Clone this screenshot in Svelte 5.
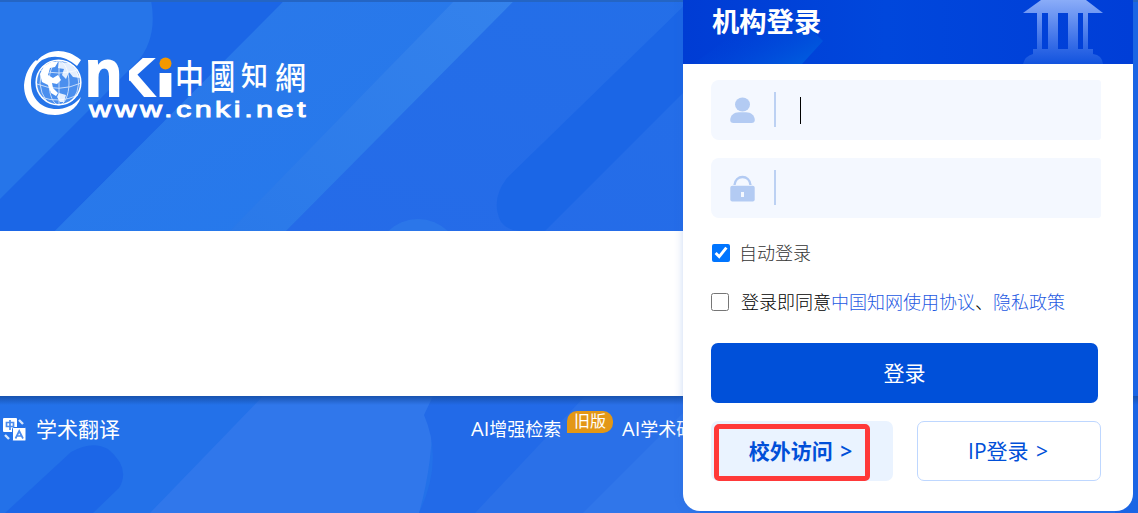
<script>
	let autoLogin = $state(true);
	let agree = $state(false);
</script>

<div class="page">
	<header class="hero">
		<svg class="pattern" viewBox="0 0 1138 231" aria-hidden="true">
			<defs>
				<linearGradient id="mid" x1="0" y1="0" x2="1" y2="1">
					<stop offset="0" stop-color="#2b78e9" />
					<stop offset="1" stop-color="#2579ec" />
				</linearGradient>
				<linearGradient id="stripe" x1="0" y1="1" x2="1" y2="0">
					<stop offset="0" stop-color="#2a79e9" />
					<stop offset="1" stop-color="#3482ec" />
				</linearGradient>
				<linearGradient id="right" x1="0" y1="1" x2="1" y2="0">
					<stop offset="0" stop-color="#256be8" />
					<stop offset="1" stop-color="#2370e8" />
				</linearGradient>
			</defs>
			<rect width="1138" height="231" fill="#2675e9" />
			<path d="M151 0Q158 38 137 62L0 199V231H55L285 0Z" fill="#1b66e6" />
			<path d="M285 0H455L230 231H55Z" fill="url(#mid)" />
			<path d="M455 0H515L286 231H230Z" fill="url(#stripe)" />
			<path d="M515 0H1138V231H286Z" fill="url(#right)" />
			<path d="M690 0L507 178Q490 200 501 222Q508 231 520 231H545L690 86Z" fill="#1b66e6" />
			<circle cx="418" cy="262" r="43" fill="#2b76e9" />
			<rect x="1100" width="38" height="231" fill="#1b66e6" />
			<rect width="1138" height="2" fill="#2465c4" />
		</svg>

		<svg class="logo" viewBox="0 0 290 74" width="290" height="74">
			<defs>
				<clipPath id="arm"><rect x="106" y="0" width="40" height="60" /></clipPath>
				<clipPath id="stem"><rect x="134" y="22" width="20" height="40" /></clipPath>
			</defs>
			<path d="M14 10C23 -1 41 -5 58 9L54 15C43 5 30 3 19 9C11 15 8 23 8 32C8 49 20 59 36 58C46 57 53 52 58 46C54 59 42 64 32 64C13 64 1 52 1 34C2 23 6 15 13 9Z" fill="#fff" />
			<circle cx="35.5" cy="31.5" r="22.3" fill="#4b8fee" stroke="#fff" stroke-width="1.6" />
			<g fill="none" stroke="#fff" stroke-width="0.9" opacity="0.75">
				<ellipse cx="36" cy="32" rx="10" ry="22" />
				<path d="M14 33Q36 42 58 32M18 46Q36 53 55 44M17 19Q36 25 55 19M36 10V54M22 14Q11 33 24 51M50 14Q62 32 49 50" />
			</g>
			<g fill="#fff">
				<path d="M17 23L21 15L28 11L35 11L32 16L27 17L25 24L30 27L35 24L38 29L34 33L29 32L30 37L35 42L33 45L28 42L25 34L19 31Z" />
				<path d="M36 11L47 12L53 19L57 27L50 26L46 21L43 28L39 24L41 18L35 17Z" opacity="0.85" />
				<path d="M36 42L43 44L41 51L37 51L34 46Z" opacity="0.85" />
			</g>
			<g class="mark">
				<text x="62" y="45" textLength="37" lengthAdjust="spacingAndGlyphs" font-size="66">n</text>
				<g clip-path="url(#arm)">
					<text x="90" y="45" textLength="42" lengthAdjust="spacingAndGlyphs" font-size="53">K</text>
				</g>
				<g clip-path="url(#stem)">
					<text x="133.5" y="45" textLength="18" lengthAdjust="spacingAndGlyphs" font-size="46">i</text>
				</g>
			</g>
			<circle cx="142.5" cy="12.5" r="6" fill="#f39800" />
			<g class="brush">
				<text x="152" y="41" font-size="38" textLength="29" lengthAdjust="spacingAndGlyphs">中</text>
				<text x="187" y="38" font-size="34" textLength="25" lengthAdjust="spacingAndGlyphs">國</text>
				<text x="218" y="35" font-size="27">知</text>
				<text x="252" y="38" font-size="31">網</text>
			</g>
			<text class="domain" x="66" y="65.5" textLength="220" lengthAdjust="spacingAndGlyphs">www.cnki.net</text>
		</svg>
	</header>

	<div class="blank"></div>

	<nav class="toolbar">
		<svg class="pattern" viewBox="0 0 1138 117" aria-hidden="true">
			<defs>
				<linearGradient id="fall" x1="0" y1="0" x2="0" y2="1">
					<stop offset="0" stop-color="#164fa8" stop-opacity="0.9" />
					<stop offset="1" stop-color="#164fa8" stop-opacity="0" />
				</linearGradient>
			</defs>
			<rect width="1138" height="117" fill="#2371e9" />
			<path d="M5 117L71 56Q92 44 108 53Q131 72 119 92L93 117Z" fill="#1c66e7" />
			<path d="M263 0H433Q434 65 419 117H150Z" fill="#3077eb" />
			<path d="M433 0H700V117H419Q444 65 424 19Z" fill="#226ae8" />
			<path d="M585 0H700V117H475Z" fill="#2a70e8" />
			<path d="M700 0L583 117H700Z" fill="#3076ea" />
			<rect x="700" width="438" height="117" fill="#2470e8" />
			<rect x="1115" width="23" height="117" fill="#1b66e6" />
			<rect width="1138" height="9" fill="url(#fall)" />
		</svg>
		<div class="links">
			<a class="translate" href="#translate">
				<svg width="24" height="24" viewBox="0 0 24 24">
					<rect x="0" y="0" width="14" height="14" rx="1" fill="#fff" />
					<rect x="9.5" y="9.5" width="13.5" height="13.5" rx="1" fill="#fff" stroke="#2371e9" />
					<g fill="none" stroke="#4c8cee" stroke-width="1.7">
						<path d="M3.5 4.5H10.5V8.5H3.5ZM7 2V12" />
						<path d="M12.5 20.5L16.2 13L20 20.5M14 18H18.5" />
					</g>
					<path d="M16 2L20 6M2 17L6 21" fill="none" stroke="#d5e5fc" stroke-width="2.4" />
				</svg>
				<span>学术翻译</span>
			</a>
			<a class="retrieval" href="#retrieval"><span class="latin">AI</span>增强检索</a>
			<span class="tag">旧版</span>
			<a class="research" href="#research"><span class="latin">AI</span>学术研究助手</a>
		</div>
	</nav>

	<section class="dialog">
		<div class="dialog-head">
			<h2>机构登录</h2>
			<svg class="facet" viewBox="0 0 180 64" width="180" height="64">
				<defs>
					<linearGradient id="facetFill" x1="0" y1="0" x2="1" y2="1">
						<stop offset="0.4" stop-color="#0046da" stop-opacity="0" />
						<stop offset="1" stop-color="#0062e0" />
					</linearGradient>
				</defs>
				<path d="M98 0L140 41L119 64H10Z" fill="url(#facetFill)" />
			</svg>
			<svg class="bank" viewBox="0 0 82 64" width="82" height="64">
				<defs>
					<linearGradient id="bankFill" x1="0" y1="0" x2="0" y2="64" gradientUnits="userSpaceOnUse">
						<stop offset="0" stop-color="#8aacf8" />
						<stop offset="0.65" stop-color="#3b70e8" />
						<stop offset="1" stop-color="#1253de" />
					</linearGradient>
				</defs>
				<g fill="url(#bankFill)">
					<path d="M18 0H63L80 13H0Z" />
					<path d="M14 13H19V49H14ZM25 13H35V49H25ZM45 13H55V49H45ZM60 13H65V49H60Z" />
					<path d="M10 49H70V54Q79 55 80 64H0Q2 56 10 54Z" />
				</g>
			</svg>
		</div>

		<form class="form" onsubmit={(e) => e.preventDefault()}>
			<div class="field">
				<svg width="26" height="28" viewBox="0 0 26 28" fill="#b3cbf3">
					<ellipse cx="12.5" cy="7.5" rx="7.5" ry="7" />
					<path d="M.2 23C.2 18.5 4 15.2 9 15.2H16C21 15.2 24.8 18.5 24.8 23Q24.8 26 21.5 26H3.5Q.2 26 .2 23Z" />
				</svg>
				<i class="divider"></i>
				<i class="caret"></i>
			</div>
			<div class="field">
				<svg width="26" height="28" viewBox="0 0 26 28">
					<path d="M4.5 10C5 5 8.5 2 12.5 2S20 5 20.5 10" fill="none" stroke="#b3cbf3" stroke-width="2.4" />
					<rect x="0.3" y="10.8" width="24.4" height="15.7" rx="2" fill="#b3cbf3" />
					<rect x="11" y="17" width="3" height="5" fill="#f4f8ff" />
				</svg>
				<i class="divider"></i>
			</div>

			<label class="auto">
				<input type="checkbox" bind:checked={autoLogin} />
				<span>自动登录</span>
			</label>
			<label class="agree">
				<input type="checkbox" bind:checked={agree} />
				<span>登录即同意<a href="#terms">中国知网使用协议</a>、<a href="#privacy">隐私政策</a></span>
			</label>

			<button class="submit">登录</button>
			<div class="others">
				<button class="outside" type="button">校外访问 <span class="arrow">&gt;</span></button>
				<button class="ip" type="button">IP登录 <span class="arrow">&gt;</span></button>
			</div>
		</form>
	</section>
</div>

<style>
	:global(body) {
		margin: 0;
		overflow: hidden;
	}

	.page {
		position: relative;
		width: 1138px;
		height: 513px;
		overflow: hidden;
		display: flex;
		flex-direction: column;
		background: #1b66e6;
		font-family: 'Open Sans', 'Noto Sans CJK SC', sans-serif;
	}
	.page a {
		text-decoration: none;
	}

	.hero,
	.toolbar {
		display: grid;
	}
	.hero {
		height: 231px;
	}
	.toolbar {
		height: 117px;
	}
	.hero > *,
	.toolbar > * {
		grid-area: 1 / 1;
	}
	.blank {
		width: 1100px;
		height: 165px;
		background: #fff;
	}
	.pattern {
		display: block;
		width: 1138px;
	}

	.logo {
		margin: 51px 0 0 23px;
		overflow: visible;
	}
	.logo text {
		fill: #fff;
	}
	.mark text {
		font-family: 'Liberation Sans', sans-serif;
		font-weight: 700;
		stroke: #fff;
		stroke-width: 2px;
	}
	.brush text {
		font-family: 'Noto Sans CJK TC', sans-serif;
		font-weight: 500;
	}
	.domain {
		font: 400 22px 'Liberation Sans', sans-serif;
		letter-spacing: 2.5px;
		stroke: #fff;
		stroke-width: 0.9px;
	}

	.links {
		display: flex;
		align-items: flex-start;
		color: #fff;
		font-size: 18px;
		line-height: 26px;
		white-space: nowrap;
	}
	.links a {
		color: #fff;
	}
	.latin {
		font-size: 20px;
	}
	.translate {
		display: flex;
		align-items: center;
		gap: 9px;
		width: 468px;
		margin: 20px 0 0 3px;
		font-size: 21px;
	}
	.translate svg {
		margin-top: 1px;
	}
	.retrieval {
		width: 96px;
		margin-top: 20px;
	}
	.tag {
		width: 46px;
		height: 22px;
		margin: 15px 9px 0 0;
		border-radius: 10px 10px 10px 0;
		background: #e39716;
		font-size: 16px;
		line-height: 21px;
		text-align: center;
	}
	.research {
		margin-top: 20px;
	}

	.dialog {
		position: absolute;
		top: 0;
		left: 683px;
		width: 450px;
		height: 511px;
		border-radius: 0 0 17px 17px;
		background: #fff;
		box-shadow: 0 0 9px rgba(40, 100, 210, 0.25);
	}
	.dialog-head {
		display: grid;
		height: 64px;
		background: linear-gradient(90deg, #003cd4, #0047dc 45%, #003ed7);
	}
	.dialog-head > * {
		grid-area: 1 / 1;
	}
	.dialog-head h2 {
		z-index: 1;
		margin: 3px 0 0 29px;
		color: #fff;
		font-size: 27.3px;
		line-height: 38px;
		font-weight: 700;
	}
	.bank {
		justify-self: end;
		margin-right: 28px;
	}

	.form {
		display: flex;
		flex-direction: column;
		padding: 16px 32px 0 28px;
	}
	.field {
		display: flex;
		align-items: center;
		height: 60px;
		margin-bottom: 18px;
		padding-left: 19px;
		box-sizing: border-box;
		border-radius: 8px 3px 3px 8px;
		background: #f4f8ff;
	}
	.divider {
		width: 2px;
		height: 35px;
		margin: 0 0 1px 18px;
		background: #bcd1f3;
	}
	.field svg {
		margin-top: 2px;
	}
	.caret {
		width: 1px;
		height: 27px;
		margin-left: 24px;
		background: #000;
	}

	.form label {
		display: flex;
		align-items: center;
		height: 26px;
		font-size: 18px;
		font-weight: 300;
		line-height: 26px;
		white-space: nowrap;
	}
	.form input {
		width: 18px;
		height: 18px;
		margin: 0;
		accent-color: #0075ff;
	}
	.auto {
		gap: 9px;
		margin-top: 4px;
		color: #333;
	}
	.auto input {
		margin-left: 1px;
	}
	.agree {
		gap: 12px;
		margin-top: 23px;
		color: #000;
	}
	.agree a {
		color: #2459e2;
	}

	button {
		padding: 0;
		border: 0;
		border-radius: 7px;
		font-family: inherit;
		font-size: 21px;
		line-height: 30px;
	}
	.submit {
		width: 387px;
		height: 60px;
		margin-top: 28px;
		background: #0050d9;
		color: #fff;
	}
	.others {
		display: flex;
		gap: 24px;
		margin-top: 18px;
	}
	.others button {
		height: 60px;
		color: #004fd8;
	}
	.arrow {
		margin-left: 2px;
		font-weight: 400;
	}
	.others .outside {
		position: relative;
		width: 182px;
		padding-right: 3px;
		background: #eaf3ff;
		font-weight: 700;
	}
	.outside .arrow {
		font-weight: 600;
	}
	.outside::after {
		content: '';
		position: absolute;
		top: 3px;
		left: 3px;
		width: 146px;
		height: 47px;
		border: 5px solid #ff3939;
		border-radius: 5px;
	}
	.others .ip {
		width: 184px;
		padding-right: 2px;
		border: 1px solid #bed7ff;
		background: #fff;
	}
</style>
